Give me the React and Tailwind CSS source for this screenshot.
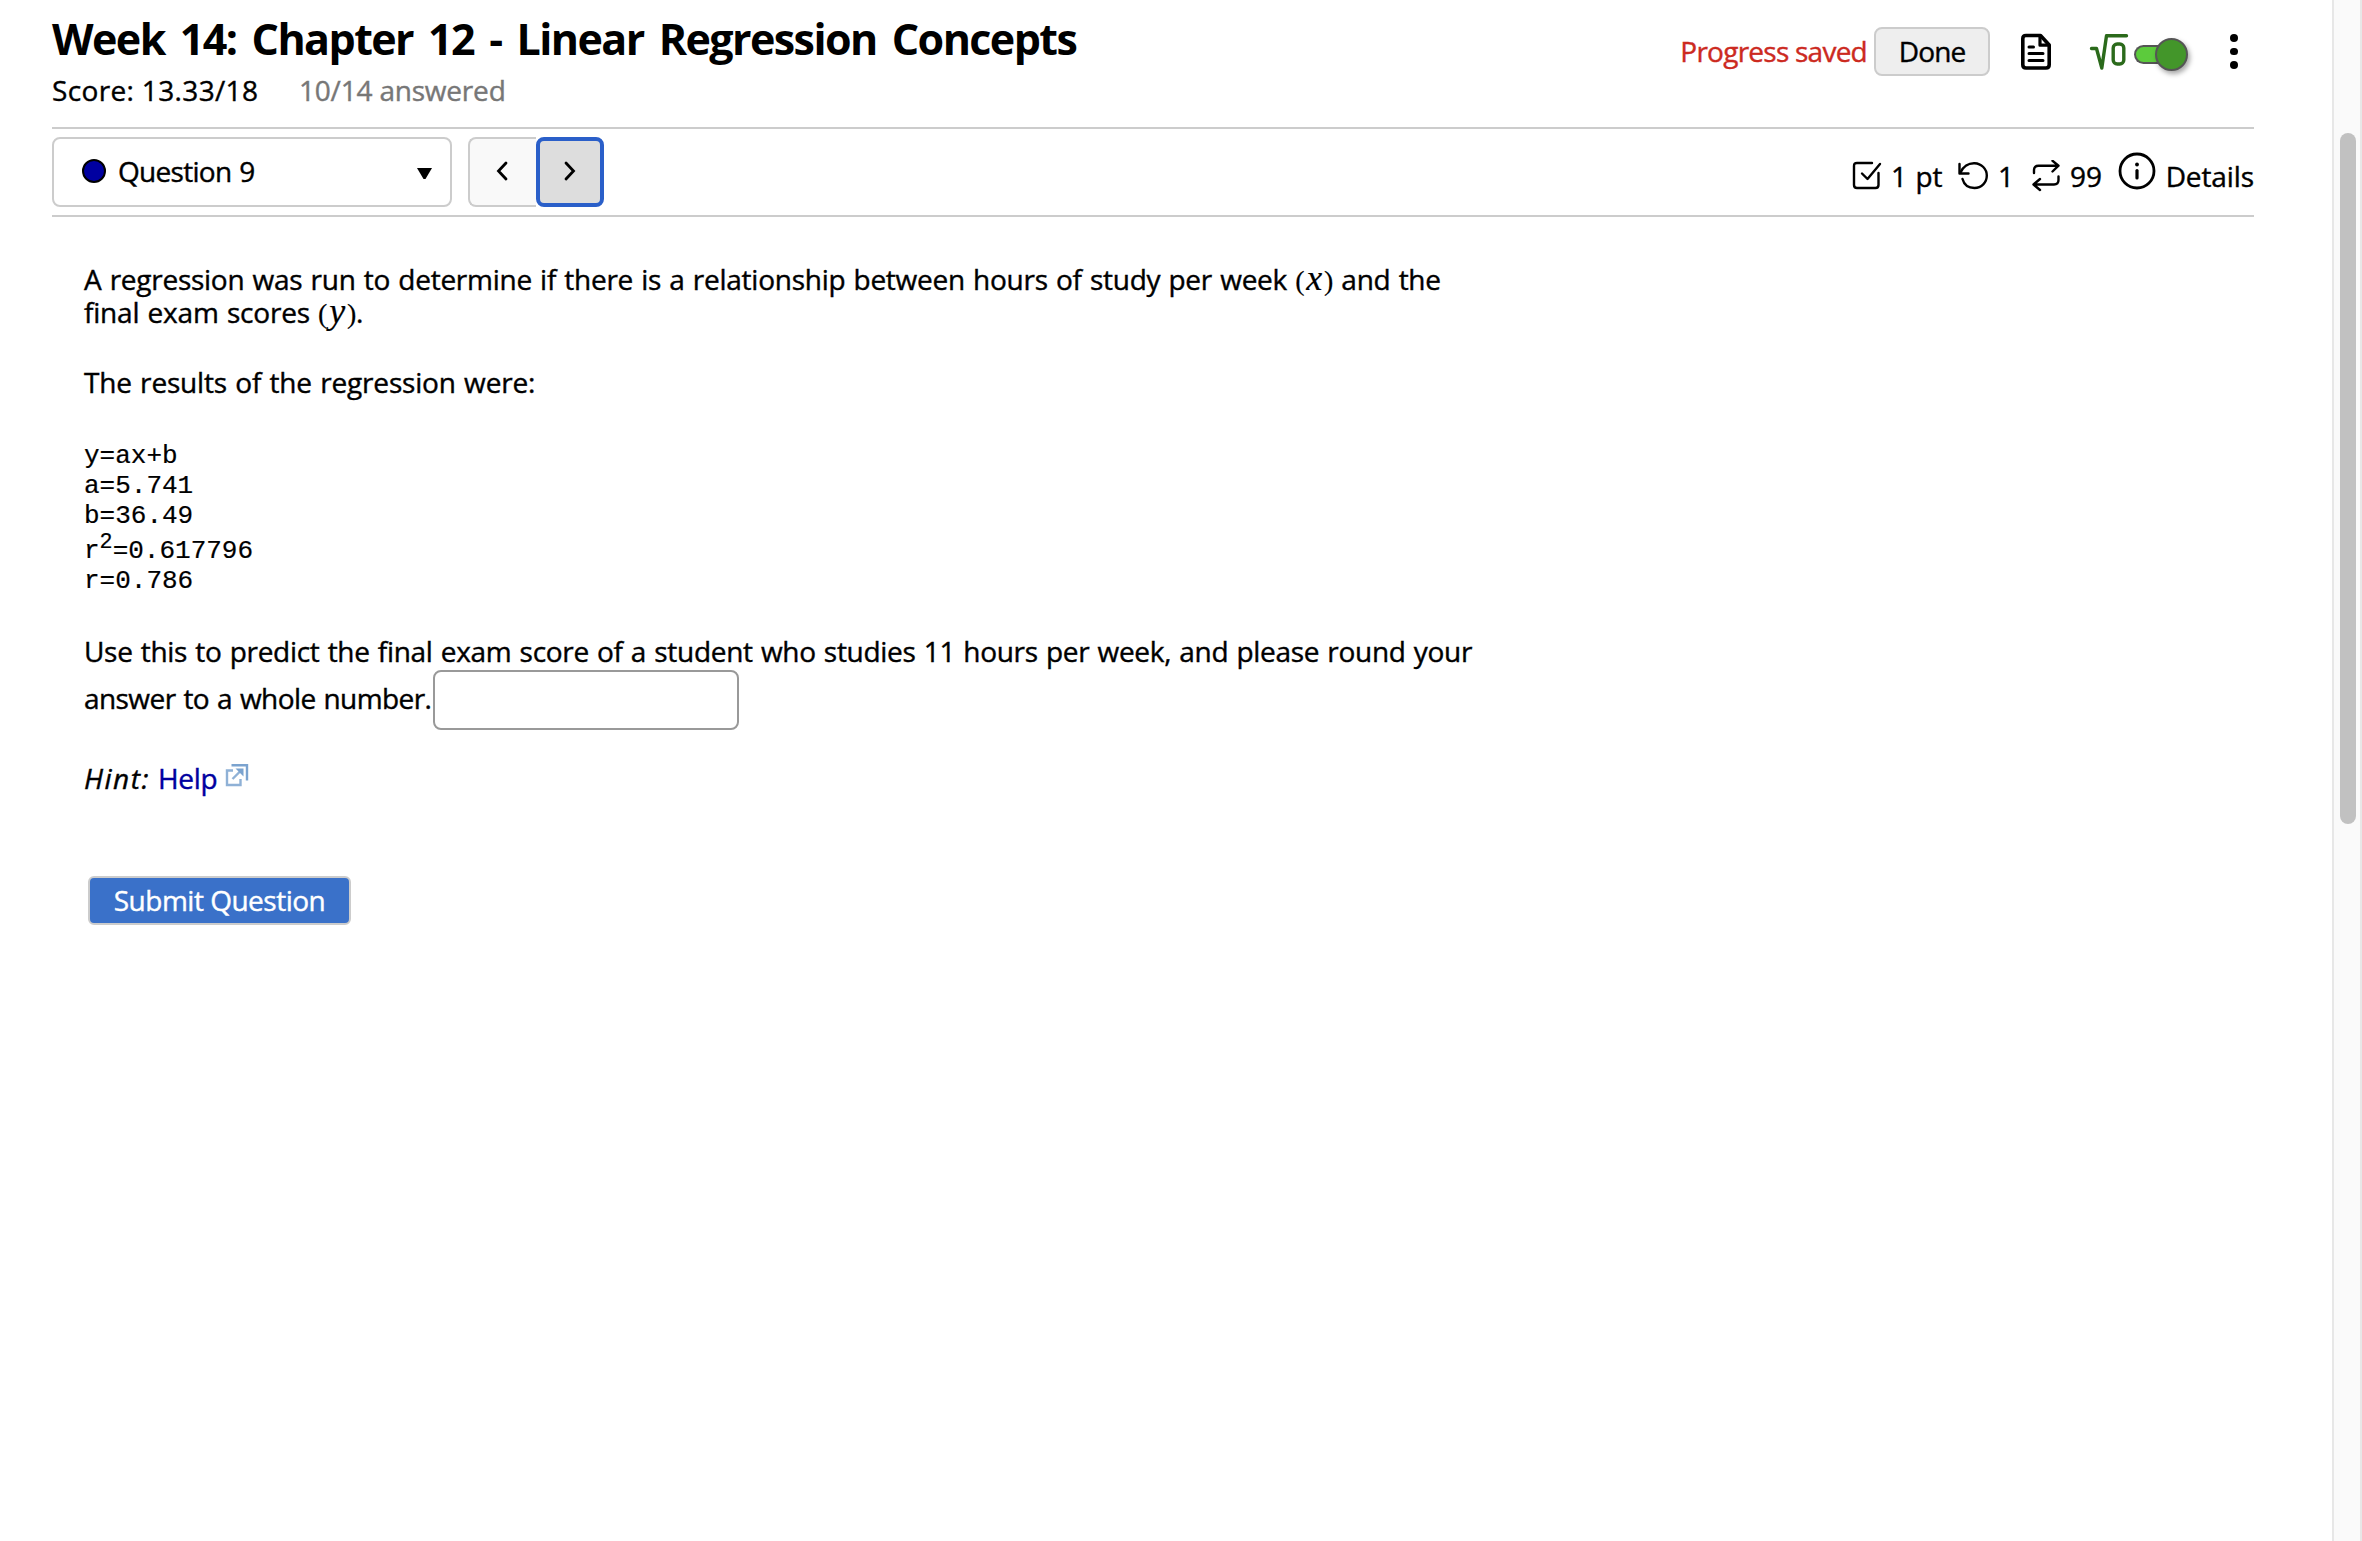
const CheckIcon = () => (
    <svg width="30" height="32" viewBox="0 0 30 32" fill="none" stroke="currentColor" strokeWidth="2.4" strokeLinecap="round" strokeLinejoin="round">
        <path d="M20 3H5Q2 3 2 6V25Q2 28 5 28H23.500Q26.500 28 26.500 25V13" />
        <path d="M10 13.500L15.500 19L28 4" />
    </svg>
);

const UndoIcon = () => (
    <svg width="32" height="32" viewBox="0 0 32 32" fill="none" stroke="currentColor" strokeWidth="2.4" strokeLinecap="round" strokeLinejoin="round">
        <path d="M2.500 4V13.500H11.500" />
        <path d="M3.500 12.500C6 6.500 11.500 3 17.500 3.200C24.500 3.500 29.800 9 29.800 15.500C29.800 22.500 24.500 28 17.500 28C11.500 28 7 24.500 5.500 19" />
    </svg>
);

const SwapIcon = () => (
    <svg width="30" height="32" viewBox="0 0 30 32" fill="none" stroke="currentColor" strokeWidth="2.4" strokeLinecap="round" strokeLinejoin="round">
        <path d="M3 13V10Q3 5.700 7.500 5.700H27M21.500 .8L27.500 5.700L21.500 11.500" />
        <path d="M27.500 16.500V20Q27.500 24.500 23 24.500H3M9 19L2.500 24.500L9 30" />
    </svg>
);

const InfoIcon = () => (
    <svg width="38" height="38" viewBox="0 0 38 38" fill="none" stroke="currentColor" strokeLinecap="round">
        <circle cx="19" cy="19" r="17" strokeWidth="2.8" />
        <path d="M19 18.500V26" strokeWidth="3.200" />
        <circle cx="19" cy="12.500" r="1.900" fill="currentColor" stroke="none" />
    </svg>
);

const PageIcon = () => (
    <svg width="32" height="38" viewBox="0 0 32 38" fill="none" stroke="currentColor" strokeWidth="3.600" strokeLinecap="round" strokeLinejoin="round">
        <path d="M20.500 2.500H6Q2.800 2.500 2.800 5.700V31.800Q2.800 35 6 35H26Q29.200 35 29.200 31.800V12Z" />
        <path d="M20 3V12.200H28.500" strokeWidth="3.200" />
        <path d="M9 14H13.500M9 20.500H23M9 27.500H23" strokeWidth="3" />
    </svg>
);

const RootIcon = () => (
    <svg width="42" height="38" viewBox="0 0 42 38" fill="none" stroke="#2b6a1b" strokeWidth="3.400" strokeLinecap="round" strokeLinejoin="round">
        <path d="M3.500 15.500H8.500L13.800 35L18.500 2.800H38.500" />
        <rect x="25.200" y="11" width="10.600" height="20" rx="4" />
    </svg>
);

const ExternalIcon = () => (
    <svg className="mt-px" width="24" height="24" viewBox="0 0 24 24" fill="none">
        <path d="M8 7.500H2V22H15.500V16" stroke="#8fb1d6" strokeWidth="2.400" />
        <path d="M6.500 2.200H22V17.500" stroke="#7ba3cf" strokeWidth="2.400" />
        <path d="M7.500 16L15.500 8" stroke="#8fb1d6" strokeWidth="2.400" />
        <path d="M10.500 5.500H18.500V13.500Z" fill="#7ba3cf" />
    </svg>
);

const Toggle = () => (
    <div className="flex items-center w-[54px] mt-[6px]">
        <div className="w-[32px] h-[19px] rounded-l-full border-2 border-r-0 border-[#555] bg-[#5ccb3c]" />
        <div className="-ml-[11px] w-[33px] h-[33px] shrink-0 rounded-full border-2 border-[#555] bg-[#43962a] shadow-[2px_3px_5px_rgba(0,0,0,0.35)]" />
    </div>
);

const Variable = ({ name }) => (
    <span className="font-['Liberation_Serif',serif] leading-[0] [-webkit-text-stroke:0.2px]">
        (<i className="text-[36px] leading-[0] px-[2px]">{name}</i>)
    </span>
);

const Header = () => (
    <header className="flex justify-between h-[127px]">
        <div className="pt-[11px]">
            <h1 className="text-[43px] leading-[56px] font-bold tracking-[-1.58px] [word-spacing:5.5px] whitespace-nowrap [-webkit-text-stroke:0px]">
                Week 14: Chapter 12 - Linear Regression Concepts
            </h1>
            <div className="mt-[5px] flex leading-9">
                <span className="w-[247px] tracking-[0.35px]">Score: 13.33/18</span>
                <span className="text-[#777] tracking-[-0.2px]">10/14 answered</span>
            </div>
        </div>
        <div className="flex items-center h-[49px] mt-[27px] pr-4">
            <span className="text-[#cc2a1f] tracking-[-0.75px] mr-[7px] mb-0.5">Progress saved</span>
            <button className="w-[116px] h-[49px] rounded-lg border-2 border-[#ccc] bg-[#eee] tracking-[-0.9px] pb-0.5">Done</button>
            <div className="ml-[30px]"><PageIcon /></div>
            <div className="ml-9"><RootIcon /></div>
            <div className="ml-1"><Toggle /></div>
            <div className="ml-[42px] flex flex-col gap-1.5">
                {[0, 1, 2].map((i) => <span key={i} className="w-2 h-[7.5px] rounded-full bg-black" />)}
            </div>
        </div>
    </header>
);

const QuestionNav = () => (
    <nav className="flex justify-between h-[90px] border-y-2 border-[#ccc] py-2">
        <div className="flex">
            <button className="flex items-center w-[400px] h-[70px] rounded-lg border-2 border-[#ccc] pl-7 pr-[18px] pb-0.5">
                <span className="w-6 h-6 rounded-full border-2 border-black bg-[#0000a0]" />
                <span className="ml-3 tracking-[-0.7px] [word-spacing:1.2px]">Question 9</span>
                <svg className="ml-auto mt-1" width="15" height="11" viewBox="0 0 15 11"><path d="M0 0H15L8.500 11H6.500Z" /></svg>
            </button>
            <button className="ml-4 flex items-center justify-center w-[68px] h-[70px] rounded-l-lg border-2 border-r-0 border-[#ccc] bg-[#f9f9f9] pr-0.5 pb-0.5">
                <svg width="12" height="20" viewBox="0 0 12 20" fill="none" stroke="#000" strokeWidth="2.800" strokeLinecap="round"><path d="M10 2L2.500 10L10 18" /></svg>
            </button>
            <button className="flex items-center justify-center w-[68px] h-[70px] rounded-lg border-4 border-[#2a5fc9] bg-[#ddd] pb-0.5">
                <svg width="12" height="20" viewBox="0 0 12 20" fill="none" stroke="#000" strokeWidth="2.800" strokeLinecap="round"><path d="M2 2L9.500 10L2 18" /></svg>
            </button>
        </div>
        <div className="flex items-center pt-2">
            <CheckIcon />
            <span className="ml-[9px] w-[52px] [word-spacing:1.2px]">1 pt</span>
            <div className="ml-3.5"><UndoIcon /></div>
            <span className="ml-[9px] w-4">1</span>
            <div className="ml-[17px]"><SwapIcon /></div>
            <span className="ml-[9px] w-8">99</span>
            <div className="ml-4 mb-2.5"><InfoIcon /></div>
            <span className="ml-[9px] w-[89px] text-right tracking-[-0.1px]">Details</span>
        </div>
    </nav>
);

const Question = () => (
    <main className="pl-8 pt-[46px] leading-[33px] whitespace-nowrap [word-spacing:1.2px]">
        <p className="h-[33px] tracking-[-0.26px]">
            A regression was run to determine if there is a relationship between hours of study per week <Variable name="x" /> and the
        </p>
        <p className="h-[33px] tracking-[-0.2px]">
            final exam scores <Variable name="y" />.
        </p>
        <p className="mt-[37px] tracking-[-0.17px]">The results of the regression were:</p>

        <div className="mt-[42px] font-['Liberation_Mono',monospace] text-[26px] leading-[30px] [-webkit-text-stroke:0.2px]">
            <div>y=ax+b</div>
            <div>a=5.741</div>
            <div>b=36.49</div>
            <div className="h-[35px] pt-[5px]">
                r<sup className="text-[21.7px] leading-[0] top-0 align-[10px]">2</sup>=0.617796
            </div>
            <div>r=0.786</div>
        </div>

        <p className="mt-[39px] tracking-[-0.3px]">
            Use this to predict the final exam score of a student who studies 11 hours per week, and please round your
        </p>
        <div className="mt-[2px] flex">
            <span className="mt-3 w-[349px] tracking-[-0.57px]">answer to a whole number.</span>
            <input className="w-[306px] h-[60px] rounded-lg border-2 border-[#999]" />
        </div>

        <div className="mt-8 flex h-[34px]">
            <i className="w-[74px] tracking-[1.5px]">Hint:</i>
            <a className="w-[67px] text-[#0000a0] tracking-[-0.3px]">Help</a>
            <ExternalIcon />
        </div>

        <button className="block mt-20 ml-1 w-[263px] h-[49px] rounded-md border-2 border-[#ccc] bg-[#3a71c9] text-white tracking-[-0.5px]">
            Submit Question
        </button>
    </main>
);

export default function App() {
    return (
        <div className="flex h-[1541px] bg-white text-black text-[28px] font-['Open_Sans',sans-serif] [-webkit-text-stroke:0.4px]">
            <div className="flex-1 pl-[52px] pr-[78px]">
                <Header />
                <QuestionNav />
                <Question />
            </div>
            <div className="w-[30px] border-x-2 border-[#e7e7e7] bg-[#fafafa] pt-[133px] pl-1.5">
                <div className="w-4 h-[691px] rounded-full bg-[#c1c1c1]" />
            </div>
        </div>
    );
}
